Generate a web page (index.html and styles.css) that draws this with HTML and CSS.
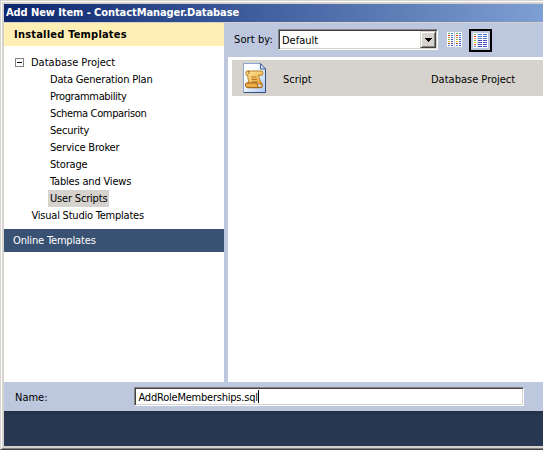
FILE: index.html
```html
<!DOCTYPE html>
<html lang="en">
<head>
<meta charset="utf-8">
<title>Add New Item - ContactManager.Database</title>
<link rel="stylesheet" href="styles.css">
</head>
<body>
<div class="window">
  <header class="titlebar">Add New Item - ContactManager.Database</header>
  <main class="content">
    <aside class="sidebar">
      <h2 class="installed">Installed Templates</h2>
      <ul class="tree">
        <li class="root"><span class="expander"></span><span>Database Project</span></li>
        <li class="child"><span>Data Generation Plan</span></li>
        <li class="child tighter"><span>Programmability</span></li>
        <li class="child tighter"><span>Schema Comparison</span></li>
        <li class="child"><span>Security</span></li>
        <li class="child"><span>Service Broker</span></li>
        <li class="child"><span>Storage</span></li>
        <li class="child"><span>Tables and Views</span></li>
        <li class="child"><span class="selected">User Scripts</span></li>
        <li class="root second"><span>Visual Studio Templates</span></li>
      </ul>
      <div class="online">Online Templates</div>
    </aside>
    <section class="main">
      <div class="toolbar">
        <span class="sort-label">Sort by:</span>
        <div class="combo"><span class="combo-value">Default</span><span class="combo-button"><svg width="7" height="4" viewBox="0 0 7 4" shape-rendering="crispEdges"><path d="M0 0h7v1H0zM1 1h5v1H1zM2 2h3v1H2zM3 3h1v1H3z"/></svg></span></div>
        <svg class="small-view" width="15" height="15" viewBox="0 0 15 15" shape-rendering="crispEdges">
          <path fill="#fff" d="M0 0h7v15H0zM8 0h7v15H8z"/>
          <g id="dots"><path fill="#60b060" d="M1 1h2v1H1z"/><path fill="#d83030" d="M1 3h2v1H1z"/><path fill="#f09040" d="M1 5h2v1H1z"/><path fill="#88c850" d="M1 7h2v1H1z"/><path fill="#e8d030" d="M1 9h2v1H1z"/><path fill="#e84830" d="M1 11h2v1H1z"/><path fill="#6090d8" d="M1 13h2v1H1z"/></g>
          <use href="#dots" x="8"/>
          <path fill="#4878cc" d="M4 1h2v1H4zM4 3h2v1H4zM4 5h2v1H4zM12 1h2v1h-2zM12 3h2v1h-2zM12 5h2v1h-2z"/>
          <path fill="#4850c0" d="M4 7h2v1H4zM4 9h2v1H4zM4 11h2v1H4zM4 13h2v1H4zM12 7h2v1h-2zM12 9h2v1h-2zM12 11h2v1h-2zM12 13h2v1h-2z"/>
        </svg>
        <span class="medium-view"><svg width="15" height="15" viewBox="0 0 15 15" shape-rendering="crispEdges">
          <path fill="#fff" d="M0 0h15v15H0z"/><path fill="#dce3f1" d="M4 0h1v15H4z"/>
          <use href="#dots"/>
          <path fill="#4878cc" d="M5 1h4v1H5zM10 1h4v1h-4zM5 3h4v1H5zM10 3h4v1h-4zM5 5h4v1H5zM10 5h4v1h-4z"/>
          <path fill="#4850c0" d="M5 7h4v1H5zM10 7h4v1h-4zM5 9h4v1H5zM10 9h4v1h-4zM5 11h4v1H5zM10 11h4v1h-4zM5 13h4v1H5zM10 13h4v1h-4z"/>
        </svg></span>
      </div>
      <div class="list">
        <div class="item">
          <svg class="script-icon" width="24" height="30" viewBox="0 0 24 30">
            <defs>
              <linearGradient id="page" x1="0" y1="0" x2="1" y2="1"><stop offset=".3" stop-color="#fff"/><stop offset="1" stop-color="#a9c9f8"/></linearGradient>
              <linearGradient id="scroll" x1="0" y1="0" x2="1" y2="1"><stop offset="0" stop-color="#ffe8a0"/><stop offset="1" stop-color="#e8a530"/></linearGradient>
            </defs>
            <path d="M.5.5h17l5 5.500v23.500H.5z" fill="url(#page)" stroke="#8ba5cf"/>
            <path d="M22.500 6v23.500H1" fill="none" stroke="#354c7c"/>
            <path d="M17.500.5V6h5z" fill="#d7e6fb" stroke="#405d94"/>
            <g transform="translate(-1.600 -4.300) scale(1.080 1.180)" stroke-width=".9">
              <path d="M6 10.500h12.500c2 0 2 3.500 0 3.500h-2.500c0 3 2 5 2.500 7.500h-11c-1-3-2-5-1.500-7.500H6c-2.500 0-2.500-3.500 0-3.500z" fill="url(#scroll)" stroke="#bd8428"/>
              <path d="M5.500 20.500h9c0 2 1 4 3 4h-11c-3.500 0-3.500-4-1-4zM17.500 24.500c2.500 0 2.500-4 .5-4" fill="#eeb14a" stroke="#a9681f"/>
              <path d="M9 15.500h5M9.500 17.500h5M10 19.500h5" stroke="#b87828"/>
              <path d="M6 12.500c1.500 0 2-2 0-2" fill="none" stroke="#a9681f"/>
            </g>
          </svg>
          <span class="item-name">Script</span>
          <span>Database Project</span>
        </div>
      </div>
    </section>
  </main>
  <div class="name-row">
    <span class="name-label">Name:</span>
    <div class="name-input"><span>AddRoleMemberships.sql</span><i class="caret"></i></div>
  </div>
  <footer class="footer"></footer>
</div>
</body>
</html>
```
FILE: styles.css
```css
* { box-sizing: border-box; }
body { margin: 0; width: 543px; height: 450px; overflow: hidden; background: #d6d3ce; font: 11px/17px "DejaVu Sans Condensed", "DejaVu Sans", sans-serif; font-stretch: condensed; color: #000; white-space: nowrap; }
.window { height: 450px; padding: 3px 0 3px 3px; display: flex; flex-direction: column; border-top: 1px solid #d6d3ce; border-left: 1px solid #d6d3ce; border-bottom: 1px solid #424142; box-shadow: inset 1px 1px #fff, inset 0 -1px #848284; }
.titlebar { height: 18px; flex: none; background: linear-gradient(90deg, #0c266c, #3d5c9c 45%, #7e9fd3); color: #fff; font-weight: bold; padding-left: 2px; line-height: 18px; letter-spacing: -.08px; }
.content { height: 360px; flex: none; display: flex; border-top: 1px solid #d6d3ce; background: #bdc7de; }
.sidebar { width: 220px; flex: none; background: #fff; }
.installed { margin: 0; height: 23px; padding-left: 10px; background: #ffefb5; font-size: 11px; line-height: 24px; letter-spacing: .21px; }
.tree { list-style: none; margin: 0; padding: 8px 0 0; height: 183px; }
.tree li { height: 17px; display: flex; align-items: center; }
.root { padding-left: 11px; }
.tree .second { padding-left: 27.500px; letter-spacing: -.22px; }
.expander { width: 9px; height: 9px; margin-right: 7px; border: 1px solid #848284; background: linear-gradient(#000, #000) center / 5px 1px no-repeat; }
.child { padding-left: 44px; letter-spacing: -.18px; }
.child span { padding: 0 2px; }
.tighter { letter-spacing: -.34px; }
.selected { background: #d6d3ce; }
.online { height: 23px; background: #395273; color: #fff; padding-left: 9px; line-height: 24px; letter-spacing: -.16px; }
.main { flex: 1; margin-left: 4px; display: flex; flex-direction: column; }
.toolbar { height: 34px; padding: 6px 0 0 6px; display: flex; align-items: flex-start; }
.sort-label { width: 44px; line-height: 22px; letter-spacing: .1px; }
.combo { width: 160px; height: 21px; display: flex; justify-content: space-between; background: #fff; border: 1px solid; border-color: #848284 #fff #fff #848284; box-shadow: inset 1px 1px #424142, inset -1px -1px #d6d3ce; padding: 1px; }
.combo-value { padding-left: 2px; line-height: 19px; }
.combo-button { width: 16px; height: 17px; background: #d6d3ce; border: 1px solid; border-color: #d6d3ce #424142 #424142 #d6d3ce; box-shadow: inset 1px 1px #fff, inset -1px -1px #848284; display: flex; align-items: center; justify-content: center; }
.small-view { margin: 3px 0 0 9px; }
.medium-view { width: 23px; height: 23px; margin-left: 7px; border: 2px solid #000; padding: 2px; display: flex; }
.list { flex: 1; background: #fff; padding: 3px 0 0 4px; }
.item { height: 36px; background: #d6d3ce; display: flex; align-items: center; padding-left: 11px; }
.item span { padding-top: 2px; }
.item-name { width: 148px; margin-left: 16px; }
.name-row { height: 29px; flex: none; background: #bdc7de; padding: 5px 0 0 11px; display: flex; }
.name-label { width: 119px; line-height: 21px; }
.name-input { width: 390px; height: 19px; background: #fff; border: 1px solid; border-color: #848284 #fff #fff #848284; box-shadow: inset 1px 1px #424142, inset -1px -1px #d6d3ce; padding: 1px 3.500px; line-height: 18px; letter-spacing: -.22px; display: flex; }
.caret { width: 1px; height: 13px; margin-top: 1px; background: #000; }
.footer { height: 35px; flex: none; background: linear-gradient(#213047, #293852 5px); }
```
